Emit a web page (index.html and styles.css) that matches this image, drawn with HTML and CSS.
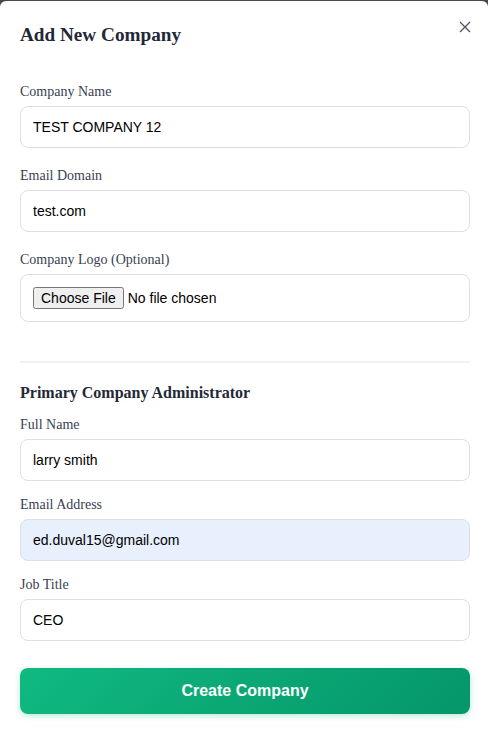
FILE: index.html
```html
<!DOCTYPE html>
<html lang="en">
<head>
<meta charset="utf-8">
<title>Add New Company</title>
<link rel="stylesheet" href="styles.css">
</head>
<body>
<div class="modal">
  <div class="modal-header">
    <h2 class="modal-title">Add New Company</h2>
    <button class="close-btn" type="button" aria-label="Close">
      <svg width="12" height="12" viewBox="0 0 12 12"><path d="M1 1 L11 11 M11 1 L1 11" stroke="#4b5563" stroke-width="1.3" fill="none"/></svg>
    </button>
  </div>
  <form class="form">
    <div class="company">
      <div class="field">
        <label class="label">Company Name</label>
        <input class="input" type="text" value="TEST COMPANY 12">
      </div>
      <div class="field">
        <label class="label">Email Domain</label>
        <input class="input" type="text" value="test.com">
      </div>
      <div class="field">
        <label class="label">Company Logo (Optional)</label>
        <input class="input file-input" type="file">
      </div>
    </div>
    <hr class="divider">
    <div class="admin">
      <h3 class="section-title">Primary Company Administrator</h3>
      <div class="field">
        <label class="label">Full Name</label>
        <input class="input" type="text" value="larry smith">
      </div>
      <div class="field">
        <label class="label">Email Address</label>
        <input class="input autofill" type="email" value="ed.duval15@gmail.com">
      </div>
      <div class="field">
        <label class="label">Job Title</label>
        <input class="input" type="text" value="CEO">
      </div>
    </div>
    <button class="submit-btn" type="button">Create Company</button>
  </form>
</div>
</body>
</html>
```
FILE: styles.css
```css
html, body {
  margin: 0;
  padding: 0;
}
body {
  background: #4a4a4a;
  font-family: "Liberation Serif", "Times New Roman", serif;
  height: 734px;
  overflow: hidden;
}
.modal {
  margin-top: 1px;
  background: #ffffff;
  border-radius: 6px 6px 0 0;
  height: 733px;
  padding: 0 18px 0 20px;
  box-sizing: border-box;
}
.modal-header {
  display: flex;
  justify-content: space-between;
  align-items: flex-start;
  padding-top: 23px;
  height: 60px;
  box-sizing: border-box;
}
.modal-title {
  margin: 0;
  font-size: 19.2px;
  font-weight: bold;
  color: #1f2937;
  line-height: 22px;
}
.close-btn {
  border: none;
  background: none;
  padding: 0;
  margin-top: -5px;
  margin-right: -3px;
  width: 16px;
  height: 16px;
  display: flex;
  align-items: center;
  justify-content: center;
  cursor: pointer;
}
.form {
  display: flex;
  flex-direction: column;
  padding-top: 21px;
}
.company,
.admin {
  display: flex;
  flex-direction: column;
}
.field {
  display: flex;
  flex-direction: column;
  margin-bottom: 18px;
}
.admin .field {
  margin-bottom: 14px;
}
.label {
  font-size: 14px;
  line-height: 20px;
  color: #374151;
  margin-bottom: 2px;
}
.input {
  height: 42px;
  box-sizing: border-box;
  border: 1px solid #dcdfe4;
  border-radius: 8px;
  padding: 0 12px;
  font-family: "Liberation Sans", Arial, sans-serif;
  font-size: 14px;
  color: #000;
  background: #fff;
  margin-top: 2px;
}
.file-input {
  height: 48px;
  padding: 12px;
}
.file-input::file-selector-button {
  font-family: "Liberation Sans", Arial, sans-serif;
  font-size: 14px;
}
.autofill {
  background: #e8f0fe;
}
.divider {
  border: none;
  border-top: 2px solid #f0f1f3;
  margin: 21px 0 20px 0;
}
.section-title {
  margin: 0 0 12px 0;
  font-size: 16px;
  line-height: 20px;
  font-weight: bold;
  color: #1f2937;
}
.submit-btn {
  margin-top: 13px;
  height: 46px;
  border: none;
  border-radius: 8px;
  background: linear-gradient(135deg, #10b981 0%, #059669 100%);
  color: #fff;
  font-family: "Liberation Sans", Arial, sans-serif;
  font-size: 16px;
  font-weight: bold;
  box-shadow: 0 2px 6px rgba(16, 185, 129, 0.3);
  cursor: pointer;
}
```
